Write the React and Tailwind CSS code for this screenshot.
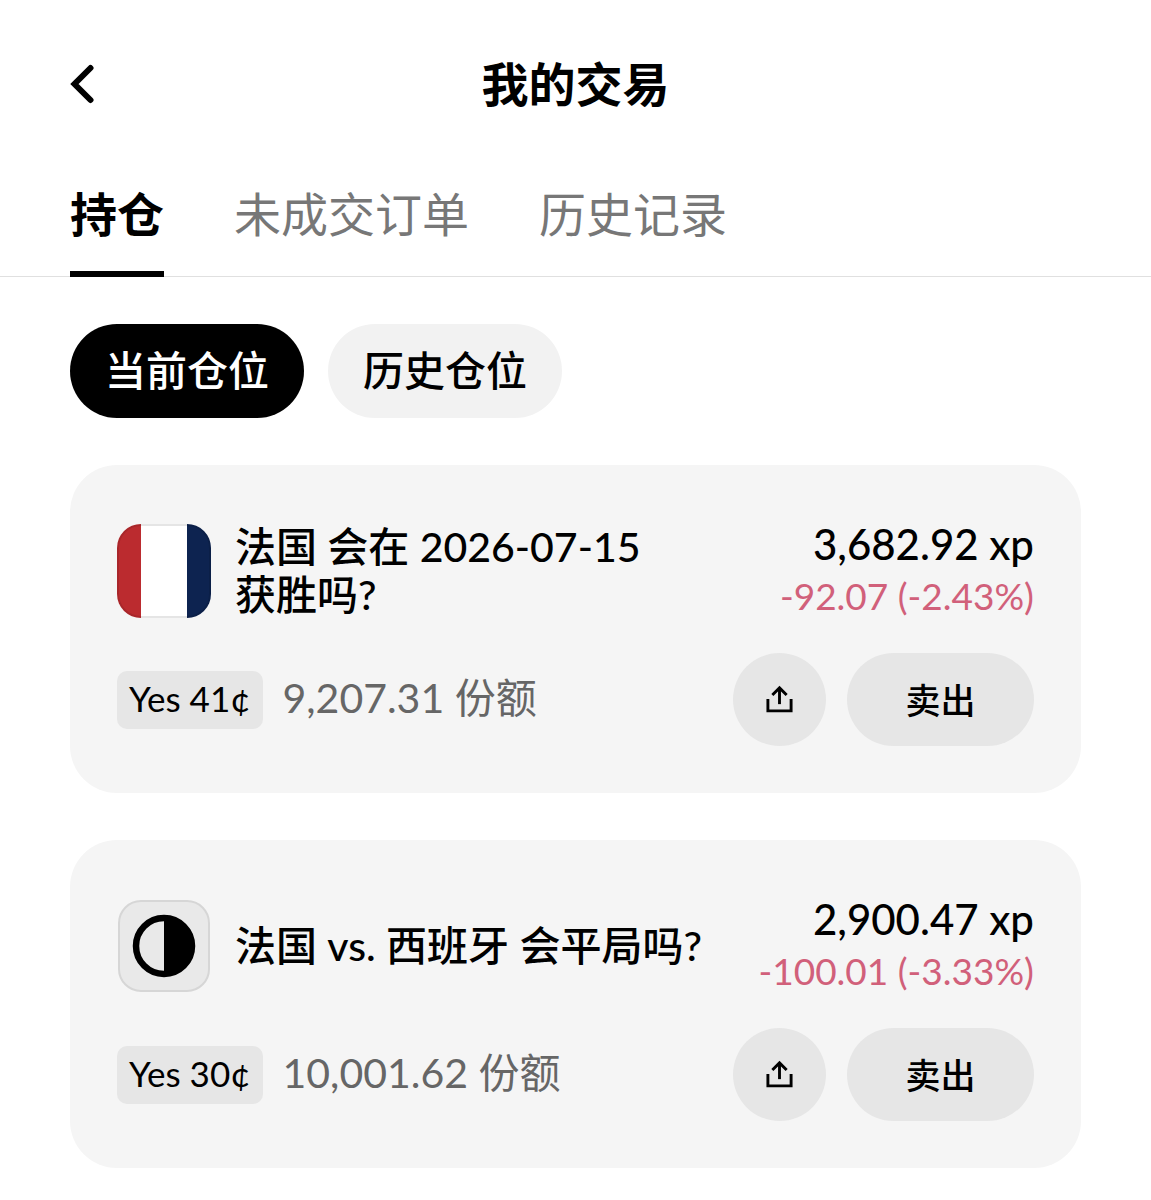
import { useState } from 'react';

const BackIcon = () => (
  <svg width="24" height="40" viewBox="0 0 24 40" fill="none" stroke="currentColor" strokeWidth="6" strokeLinecap="round" strokeLinejoin="miter">
    <path d="M20.5 4L4.5 20l16 16"/>
  </svg>
);

const ShareIcon = () => (
  <svg width="29" height="29" viewBox="0 0 30 30" fill="none" stroke="currentColor" strokeWidth="3">
    <path d="M3 14.5v12.3h24V14.5"/>
    <path d="M15 19.8V3"/>
    <path d="M7.6 10.4L15 3l7.4 7.4"/>
  </svg>
);

const FranceIcon = () => (
  <svg className="size-[94px] shrink-0 rounded-[24px]" viewBox="0 0 94 94" role="img" aria-label="法国">
    <rect width="94" height="94" fill="#fff"/>
    <rect width="24" height="94" fill="#bb2b2f"/>
    <rect x="70" width="24" height="94" fill="#0d2350"/>
    <rect x="1" y="1" width="92" height="92" rx="23" fill="none" stroke="#000" strokeOpacity="0.1" strokeWidth="2"/>
  </svg>
);

const DrawIcon = () => (
  <svg className="size-[94px] shrink-0" viewBox="0 0 94 94" role="img" aria-label="平局">
    <rect x="2" y="2" width="90" height="90" rx="22" fill="#e9e9e9" stroke="#d6d6d6" strokeWidth="2"/>
    <circle cx="47" cy="47" r="28" fill="none" stroke="#000" strokeWidth="6.5"/>
    <path d="M47 17a30 30 0 0 1 0 60z" fill="#000"/>
  </svg>
);

const TABS = ['持仓', '未成交订单', '历史记录'];
const FILTERS = ['当前仓位', '历史仓位'];

const POSITIONS = [
  {
    id: 'fra-win',
    icon: <FranceIcon />,
    title: '法国 会在 2026-07-15 获胜吗?',
    value: '3,682.92 xp',
    change: '-92.07 (-2.43%)',
    side: 'Yes 41¢',
    shares: '9,207.31 份额',
  },
  {
    id: 'fra-esp-draw',
    icon: <DrawIcon />,
    title: '法国 vs. 西班牙 会平局吗?',
    value: '2,900.47 xp',
    change: '-100.01 (-3.33%)',
    side: 'Yes 30¢',
    shares: '10,001.62 份额',
  },
];

export default function App() {
  const [tab, setTab] = useState(TABS[0]);
  const [filter, setFilter] = useState(FILTERS[0]);

  return (
    <div className="min-h-screen bg-white text-black font-['Lato','Noto_Sans_CJK_SC',sans-serif]">
      {/* Title bar */}
      <header className="grid grid-cols-[1fr_auto_1fr] items-center h-[168px] px-[70px]">
        <button className="justify-self-start" aria-label="返回">
          <BackIcon />
        </button>
        <h1 className="text-[47px] leading-[68px] font-bold">我的交易</h1>
      </header>

      {/* Tabs */}
      <nav className="flex gap-[70px] px-[70px] pt-3 border-b border-[#e0e0e0]">
        {TABS.map((name) => (
          <Tab key={name} label={name} active={tab === name} onClick={() => setTab(name)} />
        ))}
      </nav>

      <main className="px-[70px] py-[47px]">
        <div className="flex gap-6">
          {FILTERS.map((name) => (
            <Filter key={name} label={name} active={filter === name} onClick={() => setFilter(name)} />
          ))}
        </div>

        <div className="flex flex-col gap-[47px] mt-[47px]">
          {POSITIONS.map((p) => (
            <PositionCard key={p.id} {...p} />
          ))}
        </div>
      </main>
    </div>
  );
}

function Tab({ label, active, onClick }) {
  const base = '-mb-px pb-[23px] border-b-6 text-[47px] leading-[68px] whitespace-nowrap';

  return (
    <button
      className={active ? `${base} border-black font-bold` : `${base} border-transparent text-[#777777]`}
      onClick={onClick}
    >
      {label}
    </button>
  );
}

function Filter({ label, active, onClick }) {
  const base = 'h-[94px] px-[35px] rounded-full text-[41px] leading-[48px] font-medium whitespace-nowrap';

  return (
    <button className={active ? `${base} bg-black text-white` : `${base} bg-[#f2f2f2]`} onClick={onClick}>
      {label}
    </button>
  );
}

function PositionCard({ icon, title, value, change, side, shares }) {
  return (
    <article className="p-[47px] rounded-[47px] bg-[#f5f5f5]">
      <div className="flex items-center gap-6 min-h-[117px]">
        {icon}
        <h2 className="flex-1 text-[41px] leading-[48px] font-medium break-keep">{title}</h2>
        <div className="text-right whitespace-nowrap">
          <p className="text-[42px] leading-[50px] font-medium">{value}</p>
          <p className="text-[37px] leading-[54px] text-[#d1607a]">{change}</p>
        </div>
      </div>

      <div className="flex items-center mt-6">
        <span className="px-3 pb-1 rounded-[10px] bg-[#e6e6e6] text-[35px] leading-[54px]">{side}</span>
        <span className="ml-5 pb-1 text-[41px] leading-[54px] text-[#666666]">{shares}</span>
        <div className="flex gap-[21px] ml-auto">
          <button className="flex items-center justify-center size-[93px] rounded-full bg-[#e6e6e6]" aria-label="分享">
            <ShareIcon />
          </button>
          <button className="w-[187px] h-[93px] rounded-full bg-[#e6e6e6] text-[35px] leading-[48px] font-medium">卖出</button>
        </div>
      </div>
    </article>
  );
}
